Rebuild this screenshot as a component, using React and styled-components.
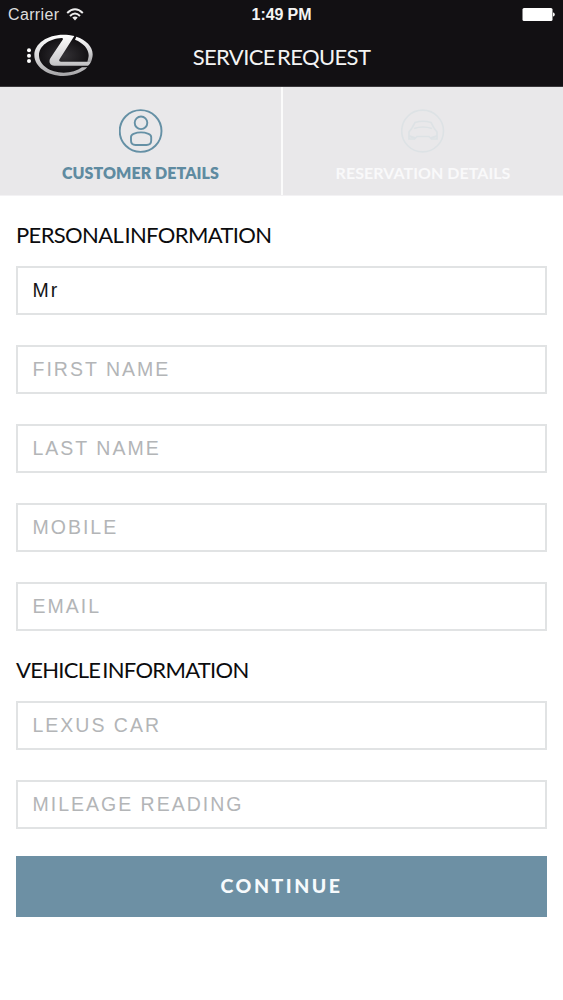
import React, { useState } from 'react';
import styled, { createGlobalStyle } from 'styled-components'

const GlobalStyle = createGlobalStyle`
  * {
    box-sizing: border-box;
  }

  body {
    margin: 0;
    background: #ffffff;
  }
`

const Screen = styled.div`
  width: 100%;
  height: 1000px;
  display: flex;
  flex-direction: column;
  background: #ffffff;
  overflow: hidden;
`

const Header = styled.header`
  height: 87px;
  background: #121013;
  border-bottom: 1px solid #3a383b;
  color: #f4f4f4;
`

const StatusBar = styled.div`
  height: 28px;
  padding: 0 8px;
  display: grid;
  grid-template-columns: 1fr auto 1fr;
  align-items: center;
  font-family: "Liberation Sans", Arial, sans-serif;
  font-size: 16px;
`

const Carrier = styled.div`
  display: flex;
  align-items: center;
  gap: 7px;
  padding-top: 1px;
  letter-spacing: 0.35px;
  color: #dedede;
`

const Clock = styled.div`
  padding-top: 1px;
  font-weight: 600;
  letter-spacing: -0.1px;
`

const Battery = styled.svg`
  justify-self: end;
`

const NavBar = styled.div`
  height: 58px;
  padding: 0 25px;
  display: grid;
  grid-template-columns: 1fr auto 1fr;
  align-items: center;
`

const Logo = styled.svg`
  margin-bottom: 3px;
`

const Title = styled.h1`
  margin: 0;
  font-family: Lato, sans-serif;
  font-size: 22px;
  font-weight: 400;
  line-height: 28px;
  letter-spacing: -0.6px;
  word-spacing: -3px;
`

const Tabs = styled.div`
  height: 109px;
  display: grid;
  grid-template-columns: 281px 1fr;
  gap: 2px;
  background: #fbfbfb;
  border-bottom: 1px solid #f3f2f4;
`

const Tab = styled.button`
  border: 0;
  padding: 22px 0 0;
  display: flex;
  flex-direction: column;
  align-items: center;
  background: #e9e8ea;
  color: ${(props) => (props.$active ? '#6590a5' : '#dde2e5')};
`

const TabLabel = styled.span`
  margin-top: 9px;
  font-family: Lato, sans-serif;
  font-size: 16px;
  font-weight: ${(props) => (props.$active ? 800 : 700)};
  line-height: 22px;
  letter-spacing: 0.05px;
  color: ${(props) => (props.$active ? '#5f8ba1' : '#f9f9fa')};
`

const Form = styled.form`
  padding: 25px 16px 0;
  display: flex;
  flex-direction: column;
`

const SectionTitle = styled.h2`
  margin: ${(props) => (props.$top ? props.$top : '0')} 0 17px;
  font-family: Lato, sans-serif;
  font-size: 22px;
  font-weight: 400;
  line-height: 28px;
  letter-spacing: ${(props) => props.$spacing};
  word-spacing: -3px;
  color: #0c0c0e;
`

const Fields = styled.div`
  display: flex;
  flex-direction: column;
  gap: 30px;
`

const Field = styled.input`
  width: 100%;
  height: 49px;
  padding: 0 14.5px;
  border: 2px solid #e1e3e4;
  border-radius: 0;
  background: #ffffff;
  font-family: "Liberation Sans", Arial, sans-serif;
  font-size: 19.5px;
  letter-spacing: 2px;
  color: #141416;
  outline: none;

  &::placeholder {
    color: #b3b5b7;
    opacity: 1;
  }
`

const ContinueButton = styled.button`
  height: 61px;
  margin-top: 27px;
  padding: 0 0 3px;
  border: 0;
  background: #6d90a4;
  font-family: Lato, sans-serif;
  font-size: 19.5px;
  font-weight: 900;
  letter-spacing: 2.5px;
  color: #f6fafc;
`

const WifiIcon = () => (
  <svg width="18" height="13" viewBox="0 0 18 13" fill="none" stroke="#ededed" strokeWidth="2">
    <path d="M1.2 5 Q9 -2.4 16.8 5" />
    <path d="M4 7.9 Q9 3.2 14 7.9" />
    <path d="M6.3 9.6 Q9 7.4 11.7 9.6 L9 12.4 Z" fill="#ededed" stroke="none" />
  </svg>
)

const BatteryIcon = () => (
  <Battery width="35" height="15" viewBox="0 0 35 15">
    <rect x="2.5" y="1" width="30" height="13" rx="1.5" fill="#ffffff" />
    <path d="M33.6 5.8 Q35 7.5 33.6 9.2 Z" fill="#ffffff" stroke="#ffffff" />
  </Battery>
)

const LexusLogo = () => (
  <Logo width="70" height="45" viewBox="75 100 210 135">
    <defs>
      <linearGradient id="chrome" x1="0" y1="0" x2="0" y2="1">
        <stop offset="0" stopColor="#ffffff" />
        <stop offset="0.6" stopColor="#d2d1d3" />
        <stop offset="1" stopColor="#a4a3a6" />
      </linearGradient>
      <radialGradient id="core">
        <stop offset="0" stopColor="#343236" />
        <stop offset="1" stopColor="#121013" />
      </radialGradient>
    </defs>
    <circle cx="87" cy="152" r="6" fill="#ffffff" />
    <circle cx="87" cy="168" r="6" fill="#ffffff" />
    <circle cx="87" cy="184" r="6" fill="#ffffff" />
    <ellipse cx="191" cy="167" rx="76" ry="52" fill="url(#core)" />
    <path
      fill="url(#chrome)"
      d="M223 109 C212 106 201 105 190 105 C142 105 103 132 103 166 C103 201 142 229 190 229
        C220 229 246 219 262 203 L246 203 C232 213 213 219 191 219 C150 219 117 196 117 167
        C117 139 147 117 185 115 C190 115 190 118 187 122 L151 176 C145 187 150 198 163 198
        L264 198 C268 195 271 191 273 186 L184 186 C177 186 176 182 179 178 Z"
    />
    <path fill="url(#chrome)" d="M229 111 C258 120 278 141 278 164 C278 172 276 179 273 187 L262 187 C264 179 266 173 266 167 C266 147 250 130 225 120 Z" />
  </Logo>
)

const CustomerIcon = () => (
  <svg width="44" height="44" viewBox="0 0 44 44" fill="none" stroke="currentColor" strokeWidth="1.9">
    <circle cx="21.6" cy="22" r="20.9" />
    <circle cx="22" cy="13.8" r="6.3" />
    <path d="M14.5 24.8 Q22 22 29.5 24.8 Q32.2 25.8 32.2 28 V31.5 Q32.2 36 27.5 36 H16.5 Q12 36 12 31.5 V28 Q12 25.8 14.5 24.8 Z" />
  </svg>
)

const CarIcon = () => (
  <svg width="44" height="44" viewBox="0 0 44 44" fill="none" stroke="currentColor" strokeWidth="1.6">
    <circle cx="21.6" cy="22" r="20.9" />
    <path d="M11 19 L14 13.5 Q22 11 30 13.5 L33 19" />
    <path d="M13 19.5 Q22 16.5 31 19.5" />
    <path d="M11 19 L8 23 V30 H13.5 L16 27.5 H28 L30.5 30 H36 V23 L33 19" />
    <path d="M8 27 L14 29 M36 27 L30 29" strokeWidth="2.2" />
  </svg>
)

const App = () => {
  const [values, setValues] = useState({ title: 'Mr' });

  const renderField = (name, placeholder) => (
    <Field
      key={name}
      name={name}
      placeholder={placeholder}
      value={values[name] || ''}
      onChange={(e) => setValues({ ...values, [name]: e.target.value })}
    />
  );

  return (
    <>
      <GlobalStyle />
      <Screen>
        <Header>
          <StatusBar>
            <Carrier>
              Carrier
              <WifiIcon />
            </Carrier>
            <Clock>1:49 PM</Clock>
            <BatteryIcon />
          </StatusBar>
          <NavBar>
            <LexusLogo />
            <Title>SERVICE REQUEST</Title>
          </NavBar>
        </Header>
        <Tabs>
          <Tab type="button" $active>
            <CustomerIcon />
            <TabLabel $active>CUSTOMER DETAILS</TabLabel>
          </Tab>
          <Tab type="button">
            <CarIcon />
            <TabLabel>RESERVATION DETAILS</TabLabel>
          </Tab>
        </Tabs>
        <Form onSubmit={(e) => e.preventDefault()}>
          <SectionTitle $spacing="-0.64px">PERSONAL INFORMATION</SectionTitle>
          <Fields>
            {renderField('title', 'TITLE')}
            {renderField('firstName', 'FIRST NAME')}
            {renderField('lastName', 'LAST NAME')}
            {renderField('mobile', 'MOBILE')}
            {renderField('email', 'EMAIL')}
          </Fields>
          <SectionTitle $top="25px" $spacing="-0.7px">VEHICLE INFORMATION</SectionTitle>
          <Fields>
            {renderField('car', 'LEXUS CAR')}
            {renderField('mileage', 'MILEAGE READING')}
          </Fields>
          <ContinueButton type="submit">CONTINUE</ContinueButton>
        </Form>
      </Screen>
    </>
  );
};

export default App;
